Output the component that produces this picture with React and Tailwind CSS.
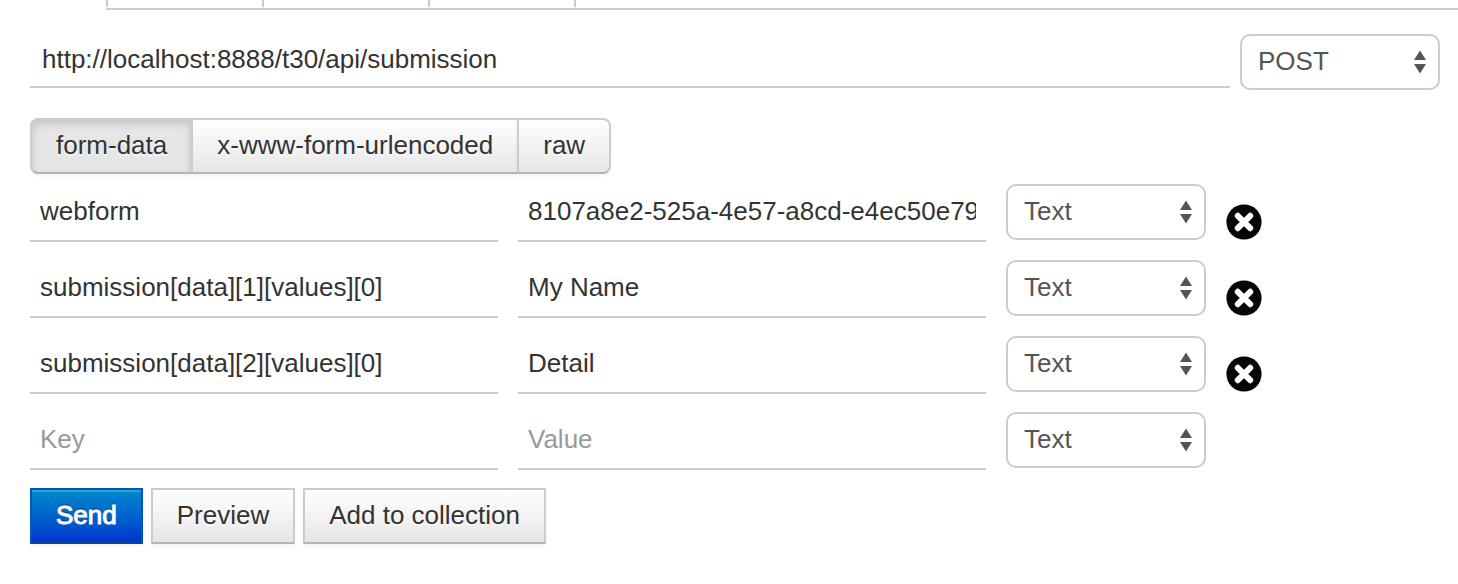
import { useState } from 'react';
import clsx from 'clsx';

const tabWidths = ['w-[156px]', 'w-[166px]', 'w-[146px]', 'w-20'];

const bodyTypes = ['form-data', 'x-www-form-urlencoded', 'raw'];

const initialRows = [
  { key: 'webform', value: '8107a8e2-525a-4e57-a8cd-e4ec50e79' },
  { key: 'submission[data][1][values][0]', value: 'My Name' },
  { key: 'submission[data][2][values][0]', value: 'Detail' },
  { key: '', value: '' },
];

const fieldClass =
  'h-[58px] min-w-0 flex-1 border-b-2 border-[#ccc] bg-transparent px-[10px] pb-[2px] text-[#333] outline-none placeholder:text-[#999]';

const buttonClass =
  'h-14 border-2 border-[#ccc] border-b-[#b3b3b3] bg-linear-to-b from-white to-[#e6e6e6] px-6 pb-[2px] text-[#333] [text-shadow:0_2px_2px_rgba(255,255,255,0.75)] shadow-[0_2px_4px_rgba(0,0,0,0.05)]';

const Select = ({ label, options }) => (
  <div className="relative w-[200px] shrink-0">
    <select
      aria-label={label}
      className="block h-14 w-full appearance-none rounded-[10px] border-2 border-[#ccc] bg-white px-4 pb-[2px] text-[#555] outline-none"
    >
      {options.map((option) => (
        <option key={option}>{option}</option>
      ))}
    </select>
    <svg
      viewBox="0 0 12 24"
      className="pointer-events-none absolute top-4 right-[14px] h-6 w-3"
      fill="#555"
      aria-hidden="true"
    >
      <path d="M6 0.5 12 10H0zM0 14h12L6 23.5z" />
    </svg>
  </div>
);

const DeleteIcon = () => (
  <svg viewBox="0 0 36 36" className="size-9" aria-hidden="true">
    <circle cx="18" cy="18" r="17.6" fill="#050707" />
    <path d="m11.8 11.8 12.4 12.4m0-12.4L11.8 24.2" stroke="#fff" strokeWidth="6" strokeLinecap="round" />
  </svg>
);

export default function App() {
  const [bodyType, setBodyType] = useState('form-data');
  const [rows, setRows] = useState(initialRows);

  const updateRow = (index, field, text) =>
    setRows(rows.map((row, i) => (i === index ? { ...row, [field]: text } : row)));

  return (
    <div className="min-h-screen bg-white font-['Liberation_Sans',Arial,sans-serif] text-[26px] leading-8">
      {/* Bottom edge of the tab strip */}
      <div className="ml-[106px] flex h-[10px] border-b-2 border-[#ccc]">
        {tabWidths.map((width) => (
          <div key={width} className={clsx('h-[7px] border-l-2 border-[#ccc]', width)} />
        ))}
      </div>

      <main className="pt-6 pr-[18px] pb-10 pl-[30px]">
        <div className="flex items-start gap-[10px]">
          <input
            aria-label="Request URL"
            defaultValue="http://localhost:8888/t30/api/submission"
            className="h-[54px] min-w-0 flex-1 border-b-2 border-[#ccc] bg-transparent px-3 pb-[2px] text-[#333] outline-none"
          />
          <Select label="Method" options={['POST', 'GET', 'PUT', 'DELETE']} />
        </div>

        <div className="mt-7 flex">
          {bodyTypes.map((type, index) => (
            <button
              key={type}
              type="button"
              aria-pressed={bodyType === type}
              onClick={() => setBodyType(type)}
              className={clsx(
                buttonClass,
                index === 0 && 'rounded-l-lg',
                index > 0 && '-ml-[2px]',
                index === bodyTypes.length - 1 && 'rounded-r-lg',
                bodyType === type &&
                  'bg-[#e6e6e6] bg-none shadow-[inset_0_4px_8px_rgba(0,0,0,0.15),0_2px_4px_rgba(0,0,0,0.05)]'
              )}
            >
              {type}
            </button>
          ))}
        </div>

        <div className="mt-[10px] mr-[178px] flex flex-col gap-[18px]">
          {rows.map((row, index) => (
            <div key={index} className="flex items-start gap-5">
              <input
                aria-label="Key"
                placeholder="Key"
                value={row.key}
                onChange={(e) => updateRow(index, 'key', e.target.value)}
                className={fieldClass}
              />
              <input
                aria-label="Value"
                placeholder="Value"
                value={row.value}
                onChange={(e) => updateRow(index, 'value', e.target.value)}
                className={fieldClass}
              />
              <Select label="Type" options={['Text', 'File']} />
              <div className="w-9 shrink-0 pt-5">
                {index < rows.length - 1 && (
                  <button
                    type="button"
                    aria-label="Delete row"
                    className="block"
                    onClick={() => setRows(rows.filter((_, i) => i !== index))}
                  >
                    <DeleteIcon />
                  </button>
                )}
              </div>
            </div>
          ))}
        </div>

        <div className="mt-[18px] flex gap-2">
          <button
            type="button"
            className="h-14 border-2 border-[#05b] border-b-[#004a95] bg-linear-to-b from-[#08c] to-[#03c] px-6 pb-[2px] text-white [-webkit-text-stroke:1px_white] [text-shadow:0_-2px_0_rgba(0,0,0,0.25)] shadow-[inset_0_2px_0_rgba(255,255,255,0.2),0_2px_4px_rgba(0,0,0,0.05)]"
          >
            Send
          </button>
          <button type="button" className={buttonClass}>
            Preview
          </button>
          <button type="button" className={buttonClass}>
            Add to collection
          </button>
        </div>
      </main>
    </div>
  );
}
